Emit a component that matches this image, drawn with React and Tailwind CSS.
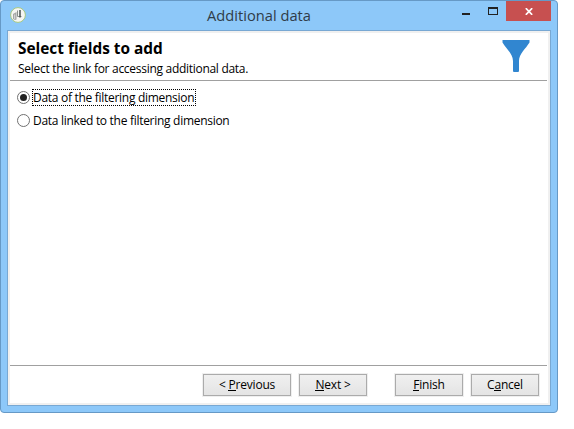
import React from "react";

function AppIcon() {
  return (
    <svg className="h-4 w-4 shrink-0" viewBox="0 0 16 16">
      <circle cx="8" cy="8" r="7.4" fill="#f6f6f3" stroke="#a5c880" strokeWidth="1" />
      <path d="M3 7 L6.500 5 V12.500 L5 13 L3 12 Z" fill="#a4a6a5" />
      <path d="M4.700 7.500 V12" stroke="#dedede" strokeWidth="1" />
      <path d="M7.500 3.500 V9.500 H11.500" fill="none" stroke="#8b918e" strokeWidth="1" />
      <path d="M10 3 V10.500" stroke="#3e4643" strokeWidth="1.4" />
    </svg>
  );
}

function Radio({ checked }) {
  return (
    <svg className="h-[13px] w-[13px] shrink-0" viewBox="0 0 13 13">
      <circle cx="6.5" cy="6.5" r="6" fill="#fff" stroke="#707070" strokeWidth="1" />
      {checked && <circle cx="6.5" cy="6.5" r="3.5" fill="#212121" />}
    </svg>
  );
}

function Button({ children, className }) {
  return (
    <button
      className={
        "flex h-[22px] items-center justify-center border border-[#ababab] bg-linear-to-b from-[#f0f0f0] to-[#e4e4e4] shadow-[0_0_0_1px_#efefef] " +
        className
      }
    >
      <span className="leading-[16px] tracking-[-0.2px] whitespace-pre">{children}</span>
    </button>
  );
}

function Key({ children }) {
  return <span className="inline-block h-[14px] border-b border-black leading-[15px]">{children}</span>;
}

export default function App() {
  return (
    <div className="h-[429px] w-[574px] overflow-hidden bg-white font-['Open_Sans','Noto_Sans',sans-serif] text-[12px] text-black">
      <div className="flex h-[413px] w-[558px] flex-col rounded-[4px] border border-[#6699c6] bg-[#8dc8f9] px-[6px] pb-[6px]">
        <div className="flex h-[29px] shrink-0 items-start">
          <div className="w-[200px] pt-[6px] pl-[3px]">
            <AppIcon />
          </div>
          <div className="flex-1 pt-[4px] text-[14.7px] leading-[20px] whitespace-nowrap text-[#303c48]">
            Additional data
          </div>
          <svg className="h-[20px] w-[45px] shrink-0" viewBox="0 0 45 20">
            <path d="M1 12h8v2h-8z" fill="#222" />
            <path d="M27 6h10v8h-10z M28 8v5h8v-5z" fill="#222" fillRule="evenodd" />
          </svg>
          <div className="flex h-[20px] w-[45px] shrink-0 items-center justify-center bg-[#c75050]">
            <svg className="mt-[1px] h-[7px] w-[8px]" viewBox="0 0 8 7">
              <path d="M.8 .2 L7.2 6.8 M7.2 .2 L.8 6.8" stroke="#fff" strokeWidth="1.7" />
            </svg>
          </div>
        </div>
        <div className="flex w-[544px] flex-1 flex-col border border-[#78a8d3] bg-[#f0f0f0] p-[2px]">
          <div className="flex flex-1 flex-col bg-white pr-px">
            <header className="flex h-[48px] justify-between border-b border-[#a0a0a0] pl-[8px]">
              <div>
                <h1 className="pt-[6px] text-[15.4px] leading-[20px] font-bold whitespace-nowrap">Select fields to add</h1>
                <p className="pt-[2px] leading-[16px] tracking-[-0.29px] whitespace-nowrap">Select the link for accessing additional data.</p>
              </div>
              <svg className="mt-[7px] mr-[17px] h-[32px] w-[28px]" viewBox="0 0 28 32">
                <path
                  d="M.5 0H27.5V2.5C23.5 9 17 14 17 21V31Q17 32 16 32H12Q11 32 11 31V21C11 14 4.500 9 .5 2.500Z"
                  fill="#3186d0"
                />
              </svg>
            </header>
            <main className="flex flex-1 flex-col pt-[8px] pl-[7px] tracking-[-0.29px]">
              <label className="flex h-[17px] items-center">
                <Radio checked />
                <span className="ml-[2px] h-[17px] w-[164px] border border-dotted border-black leading-[15px] whitespace-nowrap">
                  Data of the filtering dimension
                </span>
              </label>
              <label className="mt-[6px] flex h-[17px] items-center">
                <Radio />
                <span className="ml-[3px] leading-[17px] whitespace-nowrap">Data linked to the filtering dimension</span>
              </label>
            </main>
            <footer className="flex h-[38px] justify-end border-t border-[#a0a0a0] pt-[8px] pr-[8px]">
              <Button className="mr-[8px] w-[88px]">
                &lt; <Key>P</Key>revious
              </Button>
              <Button className="mr-[28px] w-[68px]">
                <Key>N</Key>ext &gt;
              </Button>
              <Button className="mr-[8px] w-[68px]">
                <Key>F</Key>inish
              </Button>
              <Button className="w-[68px]">
                C<Key>a</Key>ncel
              </Button>
            </footer>
          </div>
        </div>
      </div>
    </div>
  );
}
